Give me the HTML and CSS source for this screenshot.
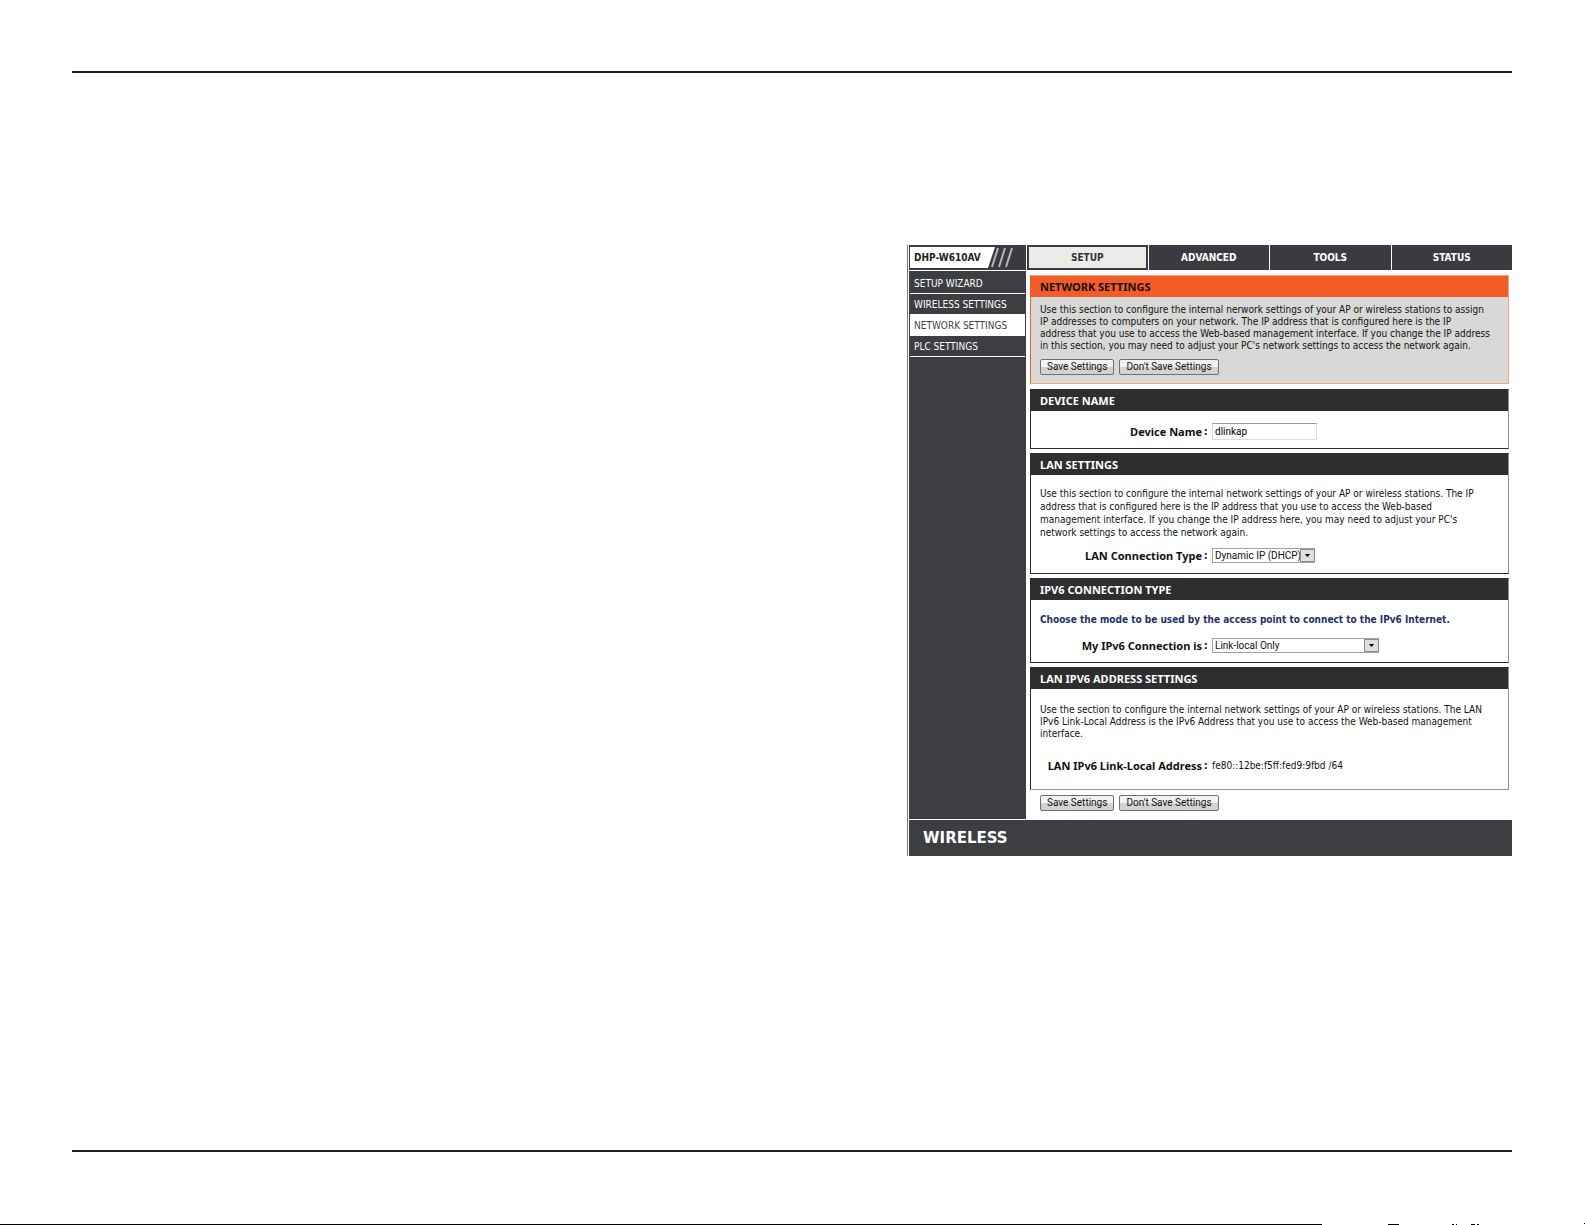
FILE: index.html
```html
<!DOCTYPE html>
<html lang="en">
<head>
	<meta charset="UTF-8">
	<title>Network Settings</title>
	<link rel="stylesheet" href="styles.css">
</head>
<body>
	<div id="page">
		<div id="screen">
			<header class="top">
				<div class="logo">
					<span>DHP-W610AV</span>
					<svg width="36" height="21" viewBox="0 0 36 21">
						<path d="M0 0H14L7 21H0z" fill="#fff"/>
						<path d="M17 1L11 20M24 1L18 20M31 1L25 20" stroke="#b4b6b8" stroke-width="2" fill="none"/>
					</svg>
				</div>
				<nav class="tabs">
					<a class="on" href="#">SETUP</a>
					<a href="#">ADVANCED</a>
					<a href="#">TOOLS</a>
					<a href="#">STATUS</a>
				</nav>
			</header>
			<div class="middle">
				<nav class="side">
					<a href="#">SETUP WIZARD</a>
					<a href="#">WIRELESS SETTINGS</a>
					<a class="on" href="#">NETWORK SETTINGS</a>
					<a href="#">PLC SETTINGS</a>
				</nav>
				<main class="main">
					<section class="box intro">
						<h1>NETWORK SETTINGS</h1>
						<div class="con">
							<p>Use this section to configure the internal nerwork settings of your AP or wireless stations to assign<br>IP addresses to computers on your network. The IP address that is configured here is the IP<br>address that you use to access the Web-based management interface. If you change the IP address<br>in this section, you may need to adjust your PC's network settings to access the network again.</p>
							<div class="btns">
								<button type="button">Save Settings</button>
								<button type="button">Don't Save Settings</button>
							</div>
						</div>
					</section>
					<section class="box">
						<h2>DEVICE NAME</h2>
						<div class="con">
							<div class="row">
								<label for="device">Device Name</label><i>:</i>
								<input id="device" type="text" value="dlinkap">
							</div>
						</div>
					</section>
					<section class="box lan">
						<h2>LAN SETTINGS</h2>
						<div class="con">
							<p>Use this section to configure the internal network settings of your AP or wireless stations. The IP<br>address that is configured here is the IP address that you use to access the Web-based<br>management interface. If you change the IP address here, you may need to adjust your PC's<br>network settings to access the network again.</p>
							<div class="row">
								<label for="lanType">LAN Connection Type</label><i>:</i>
								<span class="sel">
									<select id="lanType">
										<option>Dynamic IP (DHCP)</option>
										<option>Static IP</option>
									</select>
									<svg width="7" height="4" viewBox="0 0 7 4"><path d="M0 0H7L3.500 4z"/></svg>
								</span>
							</div>
						</div>
					</section>
					<section class="box v6">
						<h2>IPV6 CONNECTION TYPE</h2>
						<div class="con">
							<p class="blue">Choose the mode to be used by the access point to connect to the IPv6 Internet.</p>
							<div class="row">
								<label for="v6Type">My IPv6 Connection is</label><i>:</i>
								<span class="sel wide">
									<select id="v6Type">
										<option>Link-local Only</option>
										<option>Static IPv6</option>
									</select>
									<svg width="7" height="4" viewBox="0 0 7 4"><path d="M0 0H7L3.500 4z"/></svg>
								</span>
							</div>
						</div>
					</section>
					<section class="box addr">
						<h2>LAN IPV6 ADDRESS SETTINGS</h2>
						<div class="con">
							<p>Use the section to configure the internal network settings of your AP or wireless stations. The LAN<br>IPv6 Link-Local Address is the IPv6 Address that you use to access the Web-based management<br>interface.</p>
							<div class="row">
								<b>LAN IPv6 Link-Local Address</b><i>:</i>
								<span>fe80::12be:f5ff:fed9:9fbd /64</span>
							</div>
						</div>
					</section>
					<div class="btns last">
						<button type="button">Save Settings</button>
						<button type="button">Don't Save Settings</button>
					</div>
				</main>
			</div>
			<footer class="foot">WIRELESS</footer>
		</div>
	</div>
	<div class="edge">
		<svg width="198" height="2" viewBox="0 0 198 2">
			<path d="M1 1h11v1H1zM65 1h2v1h-2zM69 1h1v1h-1zM84 1h4v1h-4zM90 1h2v1h-2zM197 0h1v1h-1z"/>
		</svg>
	</div>
</body>
</html>
```
FILE: styles.css
```css
* {
	box-sizing: border-box;
}
body {
	display: flex;
	flex-direction: column;
	min-height: 100vh;
	margin: 0;
	background: #fff;
	color: #111;
	font: 10px/12px "DejaVu Sans Condensed", Tahoma, sans-serif;
}
h1, h2, p {
	margin: 0;
}
a {
	text-decoration: none;
}
i {
	font-style: normal;
}
#page {
	flex: 1;
	margin: 71px 73px 0 72px;
	padding-top: 172px;
	border: solid #231f20;
	border-width: 2px 0;
}
#screen {
	max-width: 605px;
	margin-left: auto;
	padding-left: 1px;
	border-left: 1px solid #77797b;
}
/* header */
.top {
	display: flex;
	height: 25px;
	margin-bottom: 1px;
}
.logo {
	display: flex;
	width: 117px;
	padding: 2px 1px;
	background: #3a3b40;
	color: #222;
	font-weight: bold;
	line-height: 21px;
}
.logo span {
	padding-left: 4px;
	background: #fff;
	white-space: nowrap;
}
.tabs {
	display: grid;
	grid-template-columns: repeat(4, 1fr);
	flex: 1;
	gap: 1px;
	margin-left: 1px;
}
.tabs a {
	background: #3a3b40;
	color: #fff;
	font-weight: bold;
	line-height: 25px;
	text-align: center;
}
.tabs .on {
	border: 2px solid #3a3b40;
	background: #edebe8;
	color: #333;
	line-height: 21px;
}
/* sidebar */
.middle {
	display: flex;
}
.side {
	width: 117px;
	padding: 2px 1px;
	background: #3c3e42;
}
.side a {
	display: block;
	height: 21px;
	padding-left: 4px;
	border-bottom: 1px solid #fff;
	color: #fff;
	line-height: 21px;
	white-space: nowrap;
}
.side .on {
	background: #fff;
	color: #444;
}
/* content */
.main {
	display: flex;
	flex: 1;
	flex-direction: column;
	gap: 4px;
	padding: 4px 3px 8px 4px;
}
.box {
	border: 1px solid #2e2e30;
	border-right-color: #949494;
}
.box h1,
.box h2 {
	padding-left: 9px;
	background: #2e2e30;
	color: #fff;
	font: bold 11px/21px "Noto Sans", Tahoma, sans-serif;
}
.con {
	padding: 12px 9px 8px;
}
.intro {
	margin-bottom: 1px;
	border-color: #f4a083;
	border-left-color: #f35b27;
	background: #d8d8d6;
}
.intro h1 {
	background: #f35b27;
	color: #111;
}
.intro .con {
	padding: 7px 9px 8px;
}
.intro p {
	margin-bottom: 7px;
}
.row {
	display: flex;
	align-items: center;
}
.row label,
.row b {
	width: 162px;
	font: bold 11px/12px "Noto Sans", Tahoma, sans-serif;
	text-align: right;
}
.row i {
	width: 10px;
	padding-left: 2px;
	font-weight: bold;
}
input {
	width: 105px;
	height: 17px;
	padding: 0 2px;
	border: 1px solid #ddd;
	border-top-color: #999;
	font: 10px Roboto, Tahoma, sans-serif;
}
.sel {
	position: relative;
	width: 103px;
}
.wide {
	width: 167px;
}
select {
	display: block;
	width: 100%;
	height: 15px;
	padding: 0 2px;
	border: 1px solid #a0a4aa;
	border-radius: 0;
	background: #fff;
	color: #111;
	font: 10px/12px Roboto, Tahoma, sans-serif;
	appearance: none;
}
/* drop-down arrow over the select */
.sel svg {
	position: absolute;
	top: 1px;
	right: 0;
	width: 15px;
	height: 13px;
	padding: 4px 3px;
	border: 1px solid #8a8d92;
	background: #dedede;
	pointer-events: none;
}
.lan .con {
	padding-bottom: 10px;
}
.lan p {
	margin-bottom: 9px;
	line-height: 13px;
}
.v6 .con {
	padding: 14px 9px 9px;
}
.blue {
	margin-bottom: 12px;
	color: #26306b;
	font-weight: bold;
}
.addr {
	border-bottom-color: #949494;
}
.addr .con {
	padding: 15px 9px 17px;
}
.addr p {
	margin-bottom: 20px;
}
.btns {
	display: flex;
	gap: 5px;
}
.last {
	padding: 1px 0 0 10px;
}
button {
	height: 16px;
	padding: 0 6px;
	border: 1px solid #707070;
	border-radius: 2px;
	background: linear-gradient(#f2f2f2 50%, #d2d2d2 50%);
	color: #111;
	font: 10px/14px Roboto, Tahoma, sans-serif;
}
.foot {
	height: 36px;
	margin-top: 1px;
	padding-left: 14px;
	background: #3c3e42;
	color: #fff;
	font: bold 15px/36px "DejaVu Sans", sans-serif;
}
/* cut line at the bottom */
.edge {
	display: flex;
	justify-content: flex-end;
	height: 73px;
	padding-top: 71px;
	background: linear-gradient(#000, #000) 0 100% / calc(100% - 263px) 1px no-repeat;
}
```
